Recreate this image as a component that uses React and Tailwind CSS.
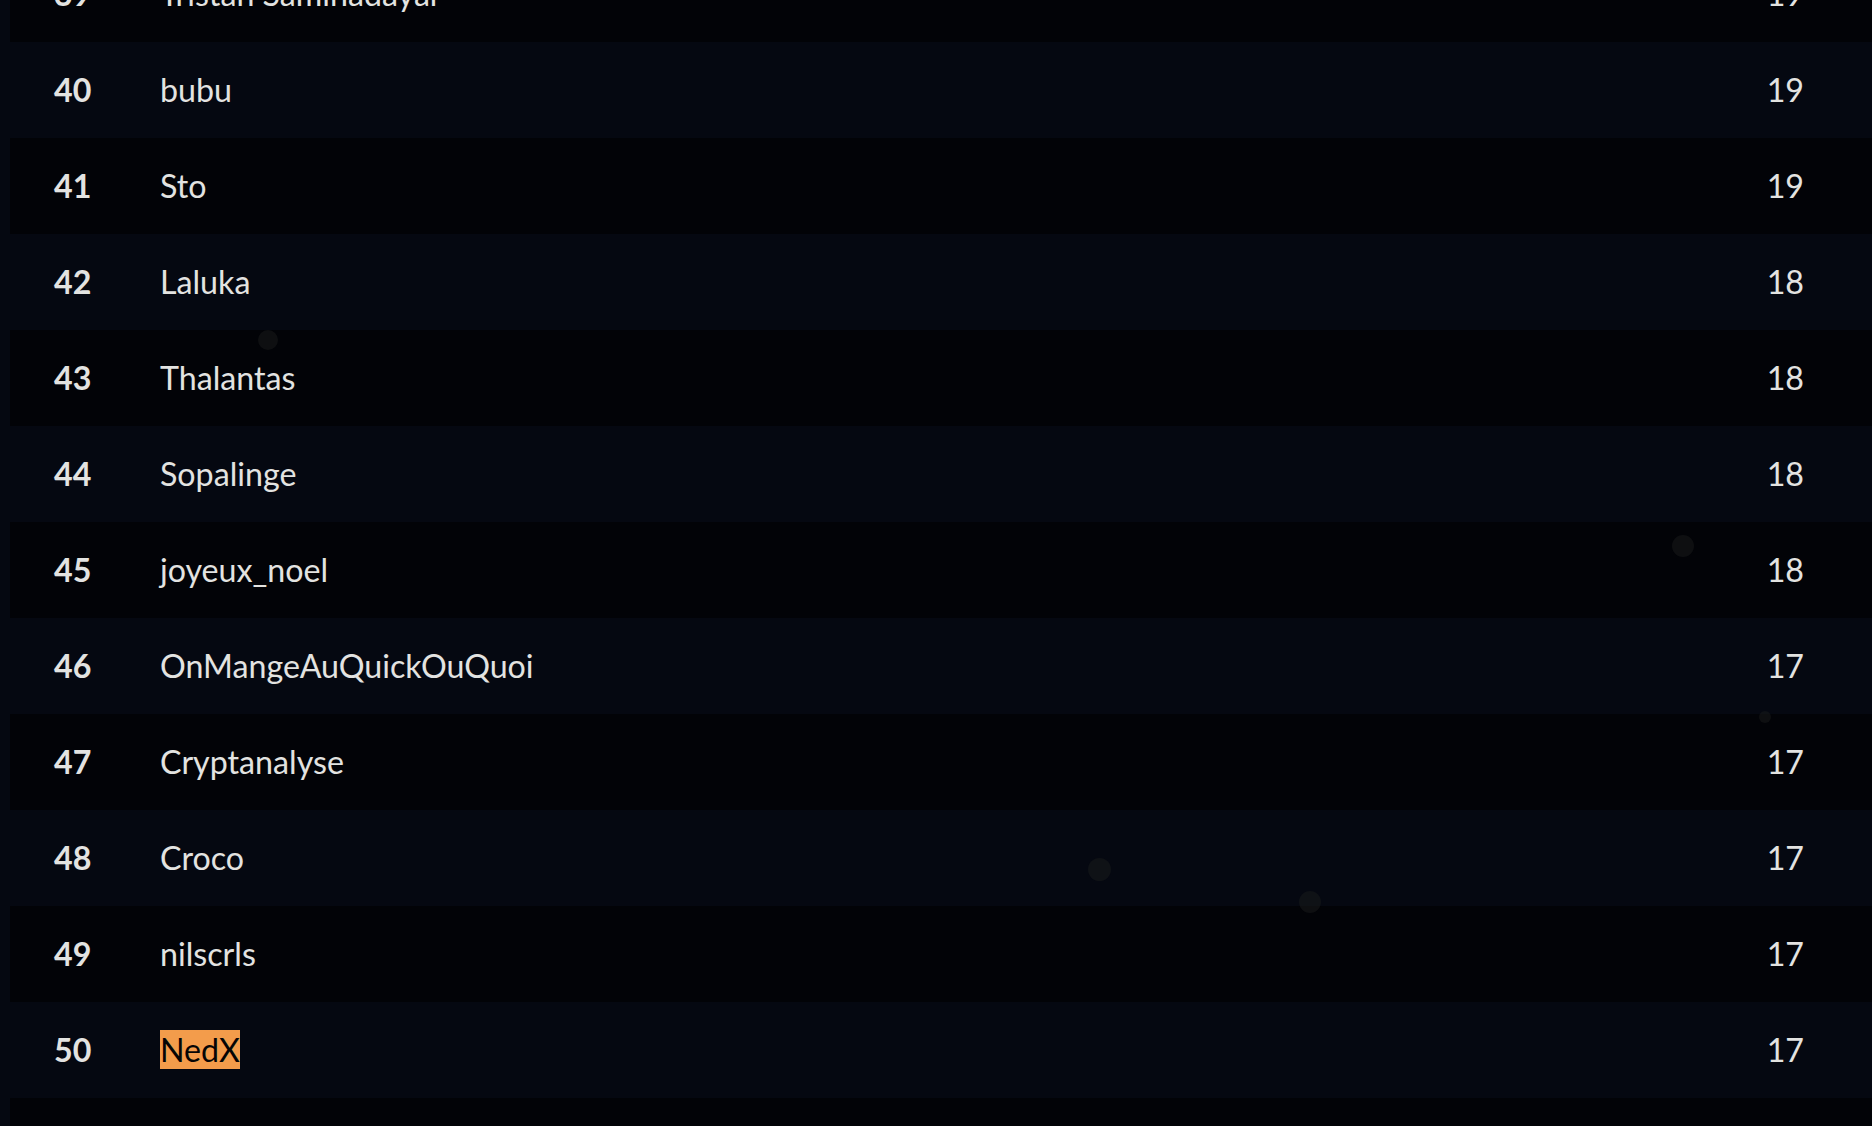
import React from "react";

const rows = [
  { rank: 39, name: "Tristan Saminadayar", score: 19 },
  { rank: 40, name: "bubu", score: 19 },
  { rank: 41, name: "Sto", score: 19 },
  { rank: 42, name: "Laluka", score: 18 },
  { rank: 43, name: "Thalantas", score: 18 },
  { rank: 44, name: "Sopalinge", score: 18 },
  { rank: 45, name: "joyeux_noel", score: 18 },
  { rank: 46, name: "OnMangeAuQuickOuQuoi", score: 17 },
  { rank: 47, name: "Cryptanalyse", score: 17 },
  { rank: 48, name: "Croco", score: 17 },
  { rank: 49, name: "nilscrls", score: 17 },
  { rank: 50, name: "NedX", score: 17, me: true },
  { rank: 51, name: "", score: "" },
];

// faint floating particles drawn over the table
const dots = [
  { x: 258, y: 330, s: 20 },
  { x: 1672, y: 535, s: 22 },
  { x: 1759, y: 711, s: 12 },
  { x: 1088, y: 858, s: 23 },
  { x: 1299, y: 891, s: 22 },
];

export default function App() {
  return (
    <div className="relative h-[1126px] overflow-hidden bg-[#050811] font-['Lato',sans-serif] text-[32.2px] text-[#e3e3e1]">
      <div className="-mt-[54px] pl-[10px]">
        {rows.map((r) => (
          <div
            key={r.rank}
            className={
              r.rank % 2 === 1
                ? "flex h-[96px] items-center bg-[#020307] pr-[68px]"
                : "flex h-[96px] items-center bg-[#050811] pr-[68px]"
            }
          >
            <span className="w-[150px] pl-[44px] font-bold">{r.name ? r.rank : ""}</span>
            <span className="flex-1">
              {r.me ? (
                <span className="bg-[#f39c4b] text-[#050505]">{r.name}</span>
              ) : (
                r.name
              )}
            </span>
            <span className="text-right">{r.score}</span>
          </div>
        ))}
      </div>

      {dots.map((d, i) => (
        <span
          key={i}
          className="pointer-events-none absolute rounded-full bg-[#1a1c1c] opacity-50"
          style={{ left: d.x, top: d.y, width: d.s, height: d.s }}
        />
      ))}
    </div>
  );
}
